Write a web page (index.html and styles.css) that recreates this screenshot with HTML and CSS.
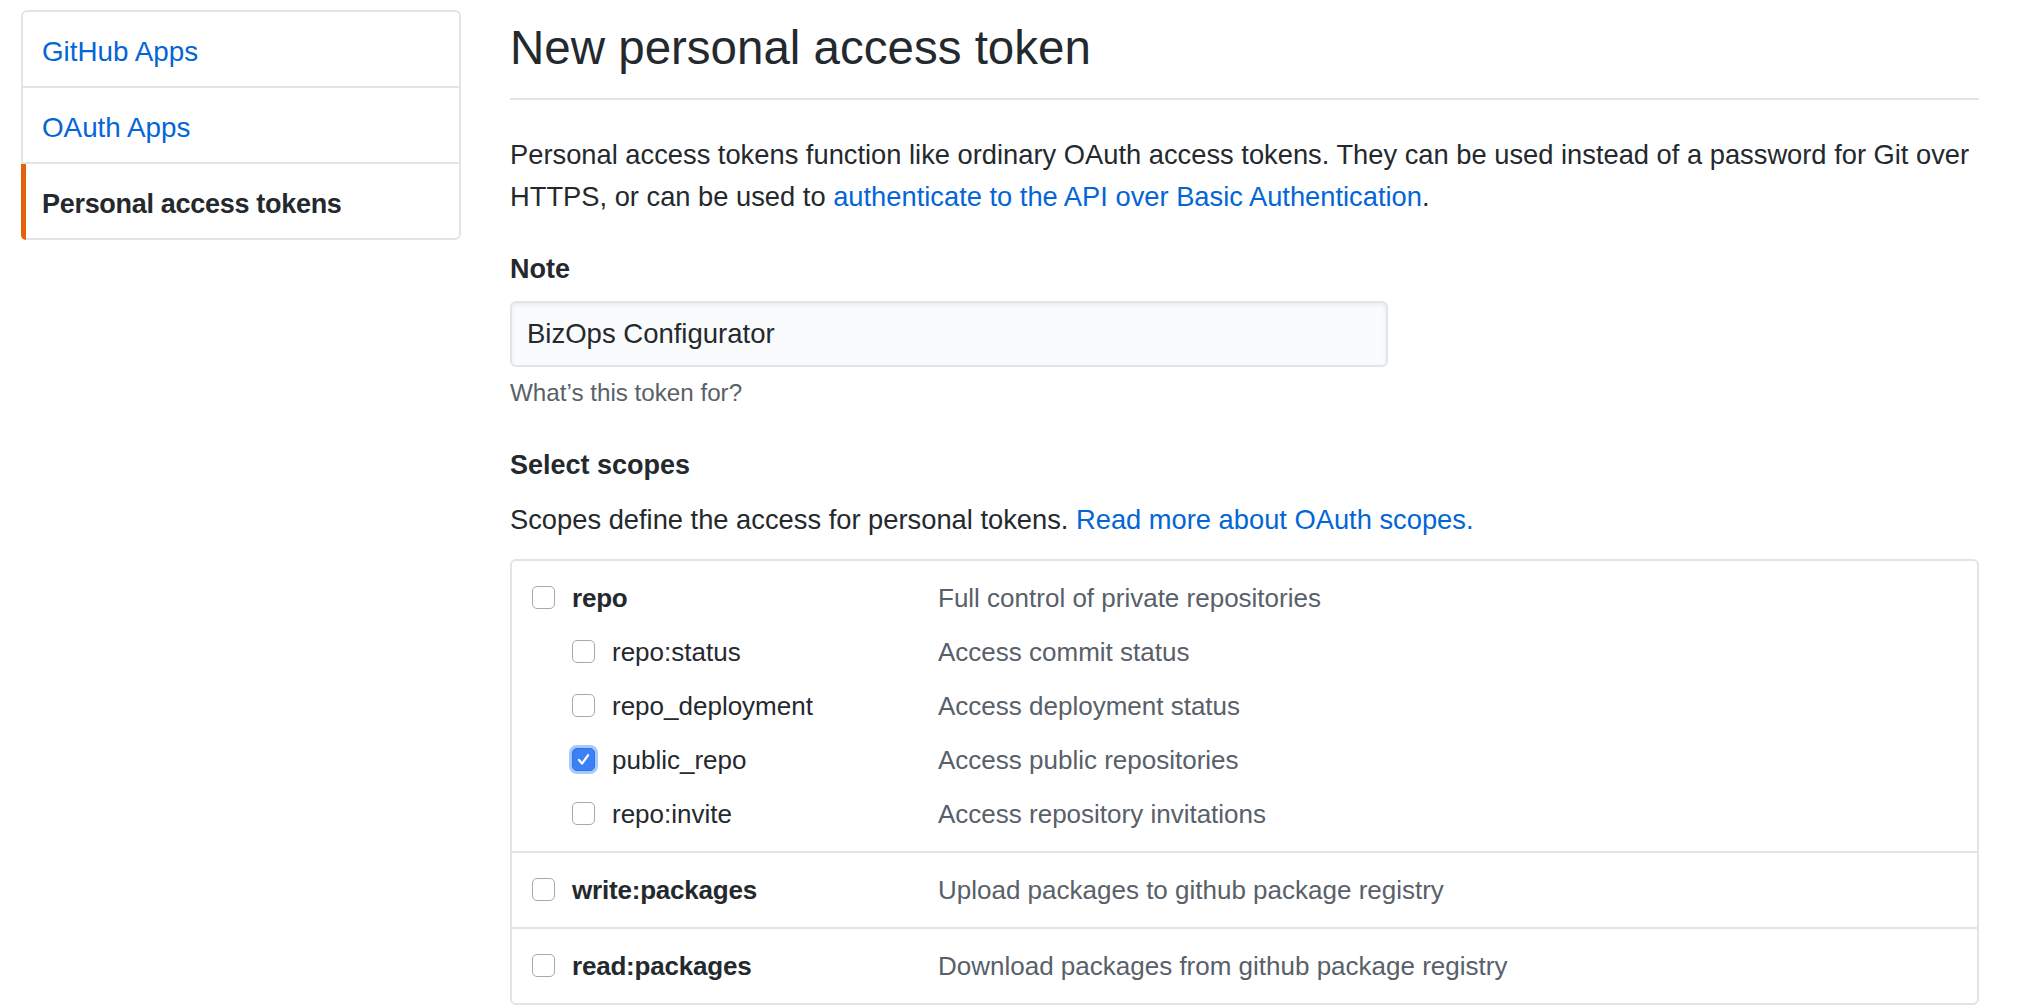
FILE: index.html
```html
<!DOCTYPE html>
<html lang="en">
<head>
<meta charset="utf-8">
<title>New personal access token</title>
<link rel="stylesheet" href="styles.css">
</head>
<body>
<div class="page">
  <nav class="menu">
    <a class="menu-item" href="#">GitHub Apps</a>
    <a class="menu-item" href="#">OAuth Apps</a>
    <a class="menu-item selected" href="#">Personal access tokens</a>
  </nav>
  <main class="content">
    <div class="subhead">
      <h2 class="subhead-heading">New personal access token</h2>
    </div>
    <p class="lead">Personal access tokens function like ordinary OAuth access tokens. They can be used instead of a password for Git over HTTPS, or can be used to <a href="#">authenticate to the API over Basic Authentication</a>.</p>
    <div class="field-label">Note</div>
    <div class="form-control">BizOps Configurator</div>
    <p class="note">What’s this token for?</p>
    <div class="field-label select-label">Select scopes</div>
    <p class="scopes-desc">Scopes define the access for personal tokens. <a href="#">Read more about OAuth scopes.</a></p>
    <div class="scopes">
      <div class="scope-group">
        <div class="scope-row">
          <div class="scope-name"><span class="cb"></span><span class="label strong">repo</span></div>
          <div class="scope-desc">Full control of private repositories</div>
        </div>
        <div class="scope-row sub">
          <div class="scope-name"><span class="cb"></span><span class="label">repo:status</span></div>
          <div class="scope-desc">Access commit status</div>
        </div>
        <div class="scope-row sub">
          <div class="scope-name"><span class="cb"></span><span class="label">repo_deployment</span></div>
          <div class="scope-desc">Access deployment status</div>
        </div>
        <div class="scope-row sub">
          <div class="scope-name"><span class="cb checked"><svg viewBox="0 0 16 16" width="19" height="19"><path d="M4.2 8.4l2.6 3L11.8 4.4" fill="none" stroke="#fff" stroke-width="1.9" stroke-linecap="round" stroke-linejoin="round"/></svg></span><span class="label">public_repo</span></div>
          <div class="scope-desc">Access public repositories</div>
        </div>
        <div class="scope-row sub">
          <div class="scope-name"><span class="cb"></span><span class="label">repo:invite</span></div>
          <div class="scope-desc">Access repository invitations</div>
        </div>
      </div>
      <div class="scope-group">
        <div class="scope-row">
          <div class="scope-name"><span class="cb"></span><span class="label strong">write:packages</span></div>
          <div class="scope-desc">Upload packages to github package registry</div>
        </div>
      </div>
      <div class="scope-group">
        <div class="scope-row">
          <div class="scope-name"><span class="cb"></span><span class="label strong">read:packages</span></div>
          <div class="scope-desc">Download packages from github package registry</div>
        </div>
      </div>
    </div>
  </main>
</div>
</body>
</html>
```

FILE: styles.css
```css
* { box-sizing: border-box; }

html, body {
  margin: 0;
  padding: 0;
  background: #fff;
}

body {
  font-family: "Liberation Sans", Arial, sans-serif;
  color: #24292e;
  font-size: 27px;
  line-height: 42px;
}

a {
  color: #0366d6;
  text-decoration: none;
}

.page {
  display: flex;
  align-items: flex-start;
  gap: 49px;
  padding: 10px 41px 0 21px;
}

/* Sidebar menu */
.menu {
  flex: none;
  width: 440px;
  display: flex;
  flex-direction: column;
  border: 2px solid #e1e4e8;
  border-radius: 6px;
}

.menu-item {
  position: relative;
  display: flex;
  align-items: center;
  height: 74px;
  padding: 5px 19px 0;
  font-size: 27.8px;
}

.menu-item + .menu-item {
  height: 76px;
  border-top: 2px solid #e1e4e8;
}

.menu-item.selected {
  color: #24292e;
  font-weight: 700;
  font-size: 27px;
  letter-spacing: -0.3px;
}

.menu-item.selected::before {
  content: "";
  position: absolute;
  left: -2px;
  top: 0;
  bottom: -2px;
  width: 5px;
  background: #e36209;
  border-bottom-left-radius: 6px;
}

/* Main content */
.content {
  flex: 1;
  min-width: 0;
}

.subhead {
  margin-top: 8.5px;
  padding-bottom: 21.5px;
  border-bottom: 2px solid #e1e4e8;
}

.subhead-heading {
  margin: 0;
  font-size: 47.5px;
  line-height: 58px;
  font-weight: 400;
}

.lead {
  margin: 33.5px 0 0;
  font-size: 27.3px;
}

.field-label {
  margin-top: 30.2px;
  font-weight: 700;
}

.select-label {
  margin-top: 33.6px;
}

.form-control {
  display: flex;
  align-items: center;
  width: 878px;
  height: 66px;
  margin-top: 11.3px;
  padding: 0 15px;
  background: #fafbfc;
  border: 2px solid #e1e4e8;
  border-radius: 6px;
  box-shadow: inset 0 2px 4px rgba(27, 31, 35, 0.075);
  font-size: 27.5px;
}

.note {
  margin: 8.1px 0 0;
  font-size: 24.2px;
  line-height: 35px;
  color: #586069;
}

.scopes-desc {
  margin: 13.8px 0 0;
  font-size: 27.3px;
}

/* Scopes table */
.scopes {
  margin-top: 17.5px;
  border: 2px solid #e1e4e8;
  border-radius: 6px;
  font-size: 26px;
}

.scope-group {
  padding: 10px 0;
}

.scope-group + .scope-group {
  border-top: 2px solid #e1e4e8;
}

.scope-row {
  display: grid;
  grid-template-columns: 406px 1fr;
  align-items: center;
  height: 54px;
  padding-left: 20px;
}

.scope-name {
  display: flex;
  align-items: center;
  gap: 17px;
}

.scope-row.sub .scope-name {
  padding-left: 40px;
}

.label.strong {
  font-weight: 700;
  letter-spacing: -0.2px;
}

.scope-desc {
  color: #586069;
}

.cb {
  flex: none;
  display: flex;
  align-items: center;
  justify-content: center;
  width: 23px;
  height: 23px;
  background: #fff;
  border: 1.5px solid #a9a9a9;
  border-radius: 5px;
}

.cb.checked {
  background: #3b80f4;
  border-color: #2f72e6;
  box-shadow: 0 0 0 3px rgba(96, 153, 246, 0.55);
}
```
